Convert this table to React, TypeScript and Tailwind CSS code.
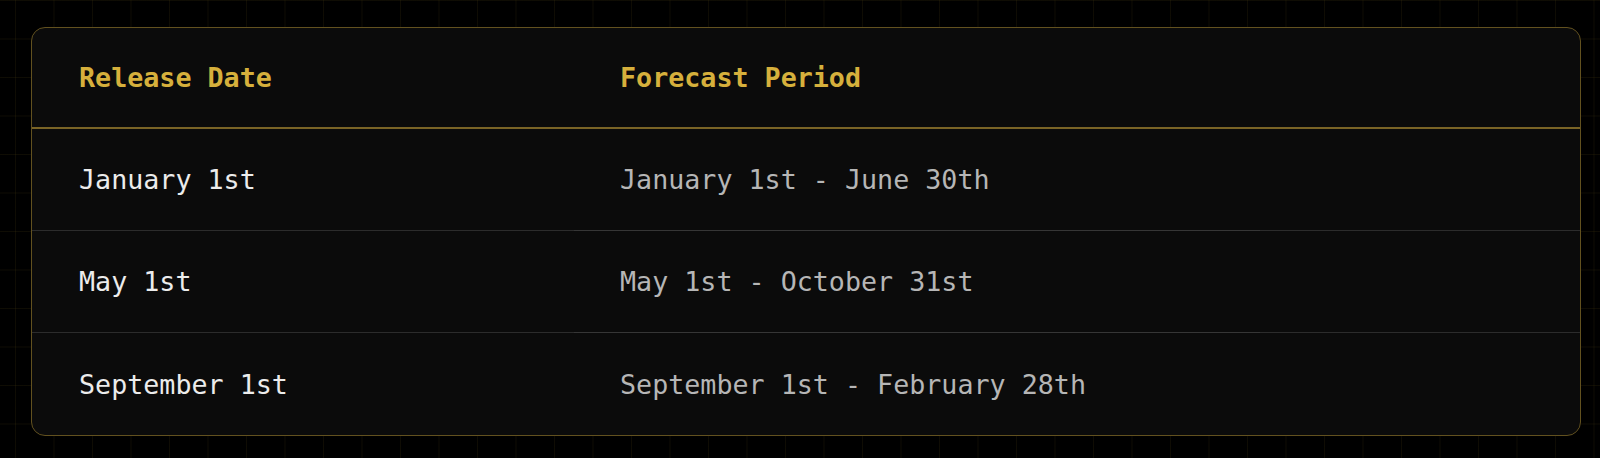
const rows = [
  { release: "January 1st", period: "January 1st - June 30th" },
  { release: "May 1st", period: "May 1st - October 31st" },
  { release: "September 1st", period: "September 1st - February 28th" },
];

const mono = "font-['DejaVu_Sans_Mono','Liberation_Mono',monospace]";

export default function App() {
  return (
    <div
      className={`min-h-[458px] w-full bg-black pt-[27px] ${mono}`}
      style={{
        backgroundImage:
          "linear-gradient(to right, rgba(212,175,55,0.07) 1px, transparent 1px), linear-gradient(to bottom, rgba(212,175,55,0.07) 1px, transparent 1px)",
        backgroundSize: "38.5px 38.5px",
        backgroundPosition: "15px 0px",
      }}
    >
      <div className="ml-[31px] w-[1550px] overflow-hidden rounded-[14px] border border-[#62511f] bg-[#0b0b0b]">
        {/* header */}
        <div className="grid h-[101px] grid-cols-[540px_1fr] items-center border-b-2 border-[#7a6426] pt-[2px]">
          <div className="pl-[47px] text-[26.7px] font-bold text-[#d6b03c]">Release Date</div>
          <div className="pl-[48px] text-[26.7px] font-bold text-[#d6b03c]">Forecast Period</div>
        </div>

        {rows.map((row, i) => (
          <div
            key={row.release}
            className={`relative grid grid-cols-[540px_1fr] items-center pt-[2px] ${
              i < rows.length - 1 ? "h-[102px] border-b border-[#2c2c2c]" : "h-[102px]"
            }`}
          >
            <div className="pl-[47px] text-[26.7px] text-[#ececec]">{row.release}</div>
            <div className="pl-[48px] text-[26.7px] text-[#b6b6b6]">{row.period}</div>
            {i < rows.length - 1 && (
              <span className="absolute bottom-[-1px] left-[542px] h-px w-[686px] bg-[#363636]" />
            )}
          </div>
        ))}
      </div>
    </div>
  );
}
